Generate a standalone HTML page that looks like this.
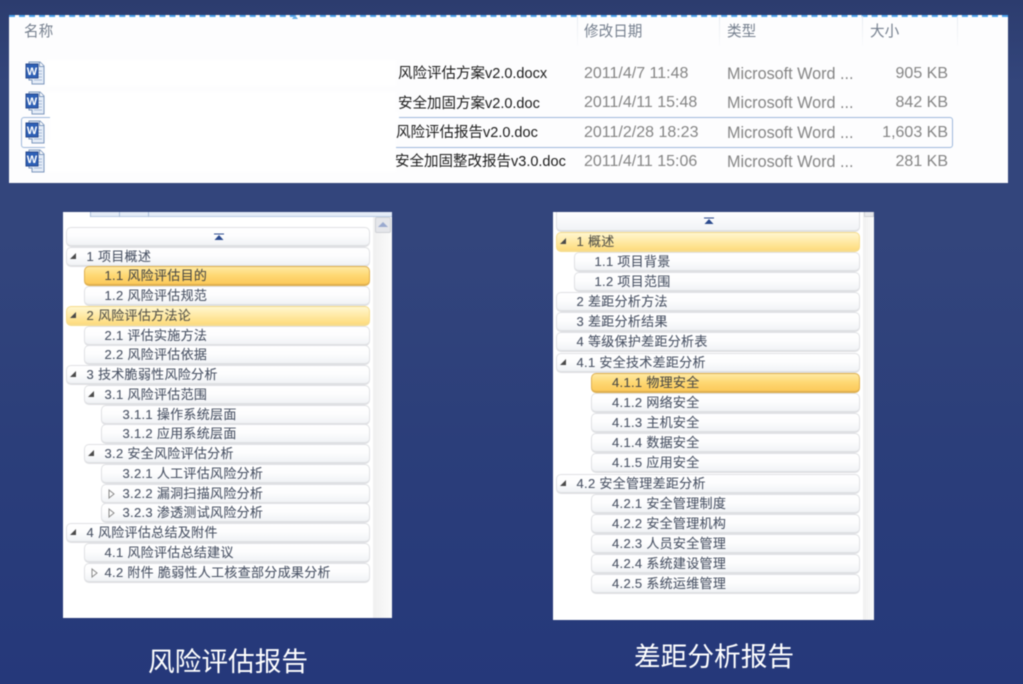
<!DOCTYPE html>
<html lang="zh"><head><meta charset="utf-8"><title>报告</title>
<style>
html,body{margin:0;padding:0}
body{width:1023px;height:684px;overflow:hidden;position:relative;background:linear-gradient(180deg,#2c3c6e 0,#33457b 12%,#33457c 35%,#2b3e7a 65%,#25387a 100%);font-family:"Liberation Sans","Noto Sans CJK SC",sans-serif}
#w{position:absolute;left:0;top:0;width:1023px;height:684px;filter:blur(.4px)}
.p{position:absolute;background:#fff}
.t{position:absolute;white-space:nowrap;line-height:20px}
.h{color:#76808f;font-size:14.6px}
.n{color:#1c1c1c;font-size:14.5px;left:0}
.d{color:#858585;font-size:16px;left:584px}
.y{color:#858585;font-size:16.2px;left:727px}
.s{color:#858585;font-size:16px;right:75px}
.c{position:absolute;top:16px;width:1px;height:30px;background:linear-gradient(#e6eaf0,#fafbfc)}
.i{position:absolute;left:25px;width:20px;height:24px}
.r{position:absolute;box-sizing:border-box;height:20px;line-height:17.500px;font-size:13px;letter-spacing:.3px;color:#4a5365;-webkit-text-stroke:.1px #4a5365;border:1px solid #e0e1e4;border-bottom:2px solid #dfe0e3;border-radius:5px;background:linear-gradient(#fff 0,#fdfdfe 45%,#f1f3f6 100%);white-space:nowrap}
.l0{left:66px;width:304px;padding-left:19.500px}
.l1{left:84px;width:286px;padding-left:19.500px}
.l2{left:101px;width:269px;padding-left:20.500px}
.m0{left:556px;width:304px;padding-left:19.500px}
.m1{left:574px;width:286px;padding-left:19.500px}
.m2{left:591px;width:269px;padding-left:20px}
.sel{background:linear-gradient(#ffe9a2 0,#fed873 50%,#fcc95a 100%);border:1px solid #dfb04f;border-bottom:2px solid #dfb04f;color:#4b4a45;-webkit-text-stroke:.1px #4b4a45}
.pal{background:linear-gradient(#fff6cf 0,#ffeaa6 50%,#fedc7e 100%);border:1px solid #f6dc8c;border-bottom:2px solid #f6dc8c;color:#55534a;-webkit-text-stroke:.1px #55534a}
.a{position:absolute;top:5px;width:0;height:0;border-bottom:6px solid #4a4a4a;border-left:6px solid transparent}
.o{position:absolute;top:4px;width:7px;height:10px}
.ti{position:absolute;color:#fff;font-size:26.7px;line-height:36px;white-space:nowrap;font-weight:400}
</style></head><body><div id="w">

<!-- file list -->
<div class="p" style="left:9px;top:15px;width:999px;height:168px;background:#fdfdfe"></div>
<div style="position:absolute;left:9px;top:14.500px;width:999px;height:0;border-top:2px dashed #4aa3ee"></div>
<div style="position:absolute;left:292px;top:15px;width:0;height:0;border-left:3px solid transparent;border-right:3px solid transparent;border-bottom:4px solid #6fb0e6"></div>
<div class="c" style="left:577px"></div><div class="c" style="left:719px"></div><div class="c" style="left:862px"></div><div class="c" style="left:957px"></div>
<div class="t h" style="left:24px;top:22px">名称</div>
<div class="t h" style="left:584px;top:22px">修改日期</div>
<div class="t h" style="left:727px;top:22px">类型</div>
<div class="t h" style="left:870px;top:22px">大小</div>

<div style="position:absolute;left:21px;top:117px;width:930px;height:29px;border:1px solid #9fb9dc;border-radius:3px"></div>
<div style="position:absolute;left:50px;top:112px;width:346px;height:40px;background:#fff"></div>
<div style="position:absolute;left:396px;top:112px;width:3px;height:10px;background:#fff"></div>
<div style="position:absolute;left:46px;top:60px;width:350px;height:26px;background:#fff"></div>
<div style="position:absolute;left:46px;top:92px;width:350px;height:25px;background:#fff"></div>
<div style="position:absolute;left:46px;top:150px;width:350px;height:22px;background:#fff"></div>
<div style="position:absolute;left:45px;top:140px;width:6px;height:12px;background:#fff"></div>

<svg class="i" style="top:61px" viewBox="0 0 20 24"><path d="M4 1H15L19 5V23H7V19H4Z" fill="#e4ecf7" stroke="#7d97bd"/><path d="M14.500 1V5.500H19" fill="#fff" stroke="#7d97bd"/><path d="M9 10H17M9 13H17M9 16H17M9 19H17" stroke="#a9bcd8"/><rect x="1" y="3" width="12" height="14" fill="#2d5fb5" stroke="#27488d"/><text x="7" y="14" font-size="11" font-weight="700" fill="#fff" text-anchor="middle" font-family="Liberation Sans">W</text></svg>
<svg class="i" style="top:91px" viewBox="0 0 20 24"><path d="M4 1H15L19 5V23H7V19H4Z" fill="#e4ecf7" stroke="#7d97bd"/><path d="M14.500 1V5.500H19" fill="#fff" stroke="#7d97bd"/><path d="M9 10H17M9 13H17M9 16H17M9 19H17" stroke="#a9bcd8"/><rect x="1" y="3" width="12" height="14" fill="#2d5fb5" stroke="#27488d"/><text x="7" y="14" font-size="11" font-weight="700" fill="#fff" text-anchor="middle" font-family="Liberation Sans">W</text></svg>
<svg class="i" style="top:120px" viewBox="0 0 20 24"><path d="M4 1H15L19 5V23H7V19H4Z" fill="#e4ecf7" stroke="#7d97bd"/><path d="M14.500 1V5.500H19" fill="#fff" stroke="#7d97bd"/><path d="M9 10H17M9 13H17M9 16H17M9 19H17" stroke="#a9bcd8"/><rect x="1" y="3" width="12" height="14" fill="#2d5fb5" stroke="#27488d"/><text x="7" y="14" font-size="11" font-weight="700" fill="#fff" text-anchor="middle" font-family="Liberation Sans">W</text></svg>
<svg class="i" style="top:149px" viewBox="0 0 20 24"><path d="M4 1H15L19 5V23H7V19H4Z" fill="#e4ecf7" stroke="#7d97bd"/><path d="M14.500 1V5.500H19" fill="#fff" stroke="#7d97bd"/><path d="M9 10H17M9 13H17M9 16H17M9 19H17" stroke="#a9bcd8"/><rect x="1" y="3" width="12" height="14" fill="#2d5fb5" stroke="#27488d"/><text x="7" y="14" font-size="11" font-weight="700" fill="#fff" text-anchor="middle" font-family="Liberation Sans">W</text></svg>

<div class="t n" style="left:398px;top:64px">风险评估方案v2.0.docx</div>
<div class="t n" style="left:398px;top:94px">安全加固方案v2.0.doc</div>
<div class="t n" style="left:396px;top:123px">风险评估报告v2.0.doc</div>
<div class="t n" style="left:395px;top:152px">安全加固整改报告v3.0.doc</div>
<div class="t d" style="top:64px">2011/4/7 11:48</div><div class="t y" style="top:64px">Microsoft Word ...</div><div class="t s" style="top:64px">905 KB</div>
<div class="t d" style="top:93px">2011/4/11 15:48</div><div class="t y" style="top:93px">Microsoft Word ...</div><div class="t s" style="top:93px">842 KB</div>
<div class="t d" style="top:123px">2011/2/28 18:23</div><div class="t y" style="top:123px">Microsoft Word ...</div><div class="t s" style="top:123px">1,603 KB</div>
<div class="t d" style="top:152px">2011/4/11 15:06</div><div class="t y" style="top:152px">Microsoft Word ...</div><div class="t s" style="top:152px">281 KB</div>

<!-- left panel -->
<div class="p" style="left:63px;top:212px;width:329px;height:406px"></div>
<div style="position:absolute;left:90px;top:212px;width:302px;height:5px;background:#e4ecf7;border-bottom:1px solid #b9cbe4;box-sizing:border-box"></div>
<div style="position:absolute;left:90px;top:212px;width:1px;height:5px;background:#a9bedb"></div>
<div style="position:absolute;left:119px;top:212px;width:1px;height:5px;background:#a9bedb"></div>
<div style="position:absolute;left:148px;top:212px;width:1px;height:5px;background:#a9bedb"></div>
<div style="position:absolute;left:373px;top:217px;width:19px;height:401px;background:linear-gradient(90deg,#f0f0f0,#fbfbfb)"></div>
<div style="position:absolute;left:375px;top:217px;width:16px;height:16px;box-sizing:border-box;background:#e5e6ea;border:1px solid #cfd1d6;border-radius:2px"></div>
<div style="position:absolute;left:378px;top:222px;width:0;height:0;border-left:5px solid transparent;border-right:5px solid transparent;border-bottom:5px solid #9aa9cf"></div>

<div class="r" style="left:66px;width:304px;top:227px"><svg style="position:absolute;left:147px;top:5px" width="10" height="8" viewBox="0 0 10 8"><path d="M0 .5H10V1.500H0ZM5 2L9.500 7H.5Z" fill="#2b4a8e"/></svg></div>
<div class="r l0" style="top:246.500px"><i class="a" style="left:3px"></i>1 项目概述</div>
<div class="r l1 sel" style="top:266.200px">1.1 风险评估目的</div>
<div class="r l1" style="top:286px">1.2 风险评估规范</div>
<div class="r l0 pal" style="top:305.700px"><i class="a" style="left:3px"></i>2 风险评估方法论</div>
<div class="r l1" style="top:325.500px">2.1 评估实施方法</div>
<div class="r l1" style="top:345.200px">2.2 风险评估依据</div>
<div class="r l0" style="top:365px"><i class="a" style="left:3px"></i>3 技术脆弱性风险分析</div>
<div class="r l1" style="top:384.700px"><i class="a" style="left:3px"></i>3.1 风险评估范围</div>
<div class="r l2" style="top:404.500px">3.1.1 操作系统层面</div>
<div class="r l2" style="top:424.200px">3.1.2 应用系统层面</div>
<div class="r l1" style="top:444px"><i class="a" style="left:3px"></i>3.2 安全风险评估分析</div>
<div class="r l2" style="top:463.700px">3.2.1 人工评估风险分析</div>
<div class="r l2" style="top:483.500px"><svg class="o" style="left:6px" viewBox="0 0 7 10"><path d="M1 1L6 5L1 9Z" fill="#fff" stroke="#8a8a8a"/></svg>3.2.2 漏洞扫描风险分析</div>
<div class="r l2" style="top:503.200px"><svg class="o" style="left:6px" viewBox="0 0 7 10"><path d="M1 1L6 5L1 9Z" fill="#fff" stroke="#8a8a8a"/></svg>3.2.3 渗透测试风险分析</div>
<div class="r l0" style="top:523px"><i class="a" style="left:3px"></i>4 风险评估总结及附件</div>
<div class="r l1" style="top:542.700px">4.1 风险评估总结建议</div>
<div class="r l1" style="top:562.500px"><svg class="o" style="left:6px" viewBox="0 0 7 10"><path d="M1 1L6 5L1 9Z" fill="#fff" stroke="#8a8a8a"/></svg>4.2 附件 脆弱性人工核查部分成果分析</div>

<!-- right panel -->
<div class="p" style="left:553px;top:212px;width:321px;height:408px"></div>
<div style="position:absolute;left:863px;top:212px;width:11px;height:408px;background:linear-gradient(90deg,#f0f0f0,#fbfbfb)"></div>
<div style="position:absolute;left:864px;top:212px;width:10px;height:5px;box-sizing:border-box;background:#e8e9ec;border:1px solid #cfd1d6;border-top:0"></div>

<div style="position:absolute;left:556px;top:212px;width:304px;height:20px;box-sizing:border-box;border:1px solid #e0e1e4;border-top:0;border-bottom:2px solid #dfe0e3;border-radius:0 0 5px 5px;background:linear-gradient(#fff,#f1f3f6)"><svg style="position:absolute;left:147px;top:5px" width="10" height="8" viewBox="0 0 10 8"><path d="M0 .5H10V1.500H0ZM5 2L9.500 7H.5Z" fill="#2b4a8e"/></svg></div>
<div class="r m0 pal" style="top:231.500px"><i class="a" style="left:3px"></i>1 概述</div>
<div class="r m1" style="top:251.600px">1.1 项目背景</div>
<div class="r m1" style="top:271.800px">1.2 项目范围</div>
<div class="r m0" style="top:292px">2 差距分析方法</div>
<div class="r m0" style="top:312.200px">3 差距分析结果</div>
<div class="r m0" style="top:332.300px">4 等级保护差距分析表</div>
<div class="r m0" style="top:352.500px"><i class="a" style="left:3px"></i>4.1 安全技术差距分析</div>
<div class="r m2 sel" style="top:372.700px">4.1.1 物理安全</div>
<div class="r m2" style="top:392.900px">4.1.2 网络安全</div>
<div class="r m2" style="top:413px">4.1.3 主机安全</div>
<div class="r m2" style="top:433.200px">4.1.4 数据安全</div>
<div class="r m2" style="top:453.400px">4.1.5 应用安全</div>
<div class="r m0" style="top:473.600px"><i class="a" style="left:3px"></i>4.2 安全管理差距分析</div>
<div class="r m2" style="top:493.700px">4.2.1 安全管理制度</div>
<div class="r m2" style="top:513.900px">4.2.2 安全管理机构</div>
<div class="r m2" style="top:534.100px">4.2.3 人员安全管理</div>
<div class="r m2" style="top:554.300px">4.2.4 系统建设管理</div>
<div class="r m2" style="top:574.400px">4.2.5 系统运维管理</div>

<div class="ti" style="left:148px;top:644px">风险评估报告</div>
<div class="ti" style="left:634px;top:639px">差距分析报告</div>
</div></body></html>
